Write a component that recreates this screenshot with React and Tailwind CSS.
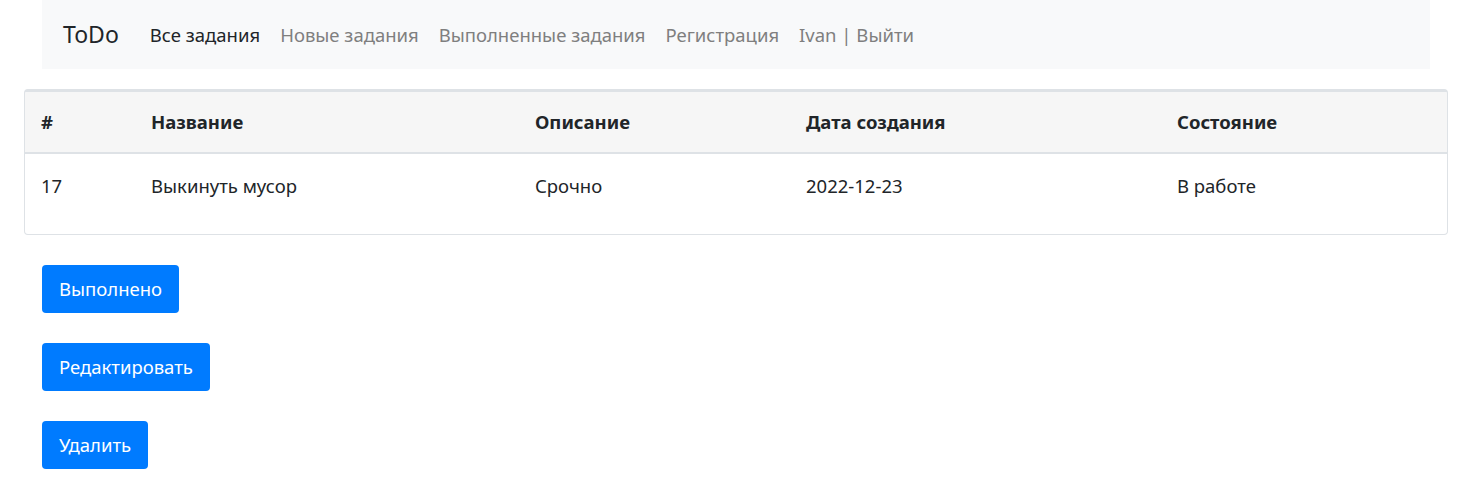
import React from 'react';

const font = { fontFamily: '"Noto Sans", "Open Sans", sans-serif' };

const NavBar = () => {
    const links = ['Новые задания', 'Выполненные задания', 'Регистрация', 'Ivan | Выйти'];
    return (
        <nav className="ml-[42px] mr-[42px] h-[69px] bg-[#f8f9fa] flex items-center pl-[21px]">
            <span className="text-[23px] text-[#212529] mr-[21px]">ToDo</span>
            <span className="text-[18.5px] text-[#212529] px-[10px]">Все задания</span>
            {links.map((l) => (
                <span key={l} className="text-[18.5px] text-[#7f7f7f] px-[10px]">{l}</span>
            ))}
        </nav>
    );
};

const cols = 'grid grid-cols-[110px_384px_271px_371px_1fr]';

const TaskTable = () => {
    return (
        <div className="mx-[24px] mt-[20px] border border-[#dee2e6] border-t-[3px] rounded-[4px] overflow-hidden">
            <div className={`${cols} h-[62px] items-center bg-[#f6f6f6] border-b-2 border-[#dee2e6] font-bold text-[18.5px] text-[#212529]`}>
                <div className="pl-[16px]">#</div>
                <div className="pl-[16px]">Название</div>
                <div className="pl-[16px]">Описание</div>
                <div className="pl-[16px]">Дата создания</div>
                <div className="pl-[16px]">Состояние</div>
            </div>
            <div className={`${cols} h-[80px] pb-[16px] items-center text-[18.5px] text-[#212529]`}>
                <div className="pl-[16px]">17</div>
                <div className="pl-[16px]">Выкинуть мусор</div>
                <div className="pl-[16px]">Срочно</div>
                <div className="pl-[16px]">2022-12-23</div>
                <div className="pl-[16px]">В работе</div>
            </div>
        </div>
    );
};

const Button = ({ children }) => (
    <button className="h-[48px] px-[17px] bg-[#007bff] text-white text-[18.5px] rounded-[4px]">
        {children}
    </button>
);

const App = () => {
    return (
        <div className="min-h-screen bg-white" style={font}>
            <NavBar />
            <TaskTable />
            <div className="ml-[42px] mt-[30px] flex flex-col items-start gap-[30px]">
                <Button>Выполнено</Button>
                <Button>Редактировать</Button>
                <Button>Удалить</Button>
            </div>
        </div>
    );
};

export default App;
